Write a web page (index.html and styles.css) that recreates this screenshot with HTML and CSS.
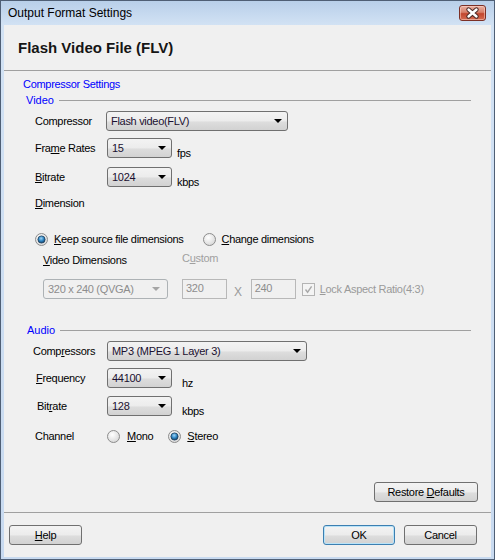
FILE: index.html
```html
<!DOCTYPE html>
<html lang="en">
<head>
  <meta charset="UTF-8">
  <title>Output Format Settings</title>
  <link rel="stylesheet" href="styles.css">
</head>
<body>
  <div class="window">
    <div class="titlebar">
      <span class="title">Output Format Settings</span>
      <span class="close">
        <svg width="27" height="16" viewBox="0 0 27 16">
          <path d="M9.5 4.5 L17.5 11.5 M17.5 4.5 L9.5 11.5" stroke="#4a2a26" stroke-width="4.4" stroke-linecap="round"/>
          <path d="M9.5 4.5 L17.5 11.5 M17.5 4.5 L9.5 11.5" stroke="#fff" stroke-width="2.4" stroke-linecap="round"/>
        </svg>
      </span>
    </div>

    <div class="client">
      <div class="header">
        <h1>Flash Video File (FLV)</h1>
      </div>

      <div class="main">
        <div class="section-title">Compressor Settings</div>

        <div class="group"><span>Video</span><span class="rule"></span></div>

        <div class="row row-compressor">
          <span class="lbl">Compressor</span>
          <div class="combo combo-wide">Flash video(FLV)<i class="arrow"></i></div>
        </div>

        <div class="row row-frame">
          <span class="lbl">Fra<u>m</u>e Rates</span>
          <div class="combo combo-small">15<i class="arrow"></i></div>
          <span class="unit">fps</span>
        </div>

        <div class="row row-bitrate">
          <span class="lbl"><u>B</u>itrate</span>
          <div class="combo combo-small">1024<i class="arrow"></i></div>
          <span class="unit">kbps</span>
        </div>

        <div class="row row-text row-dimension">
          <span class="lbl"><u>D</u>imension</span>
        </div>

        <div class="row row-radios">
          <label class="radio checked">
            <svg width="13" height="13" viewBox="0 0 13 13">
              <defs>
                <radialGradient id="rb1" cx="0.4" cy="0.35" r="0.7"><stop offset="0" stop-color="#fff"/><stop offset="1" stop-color="#d6d6d6"/></radialGradient>
                <radialGradient id="dot1" cx="0.45" cy="0.35" r="0.65"><stop offset="0" stop-color="#9fd4f5"/><stop offset="0.55" stop-color="#2f86c4"/><stop offset="1" stop-color="#123f66"/></radialGradient>
              </defs>
              <circle cx="6.5" cy="6.5" r="6" fill="url(#rb1)" stroke="#8c8c8c"/>
              <circle cx="6.5" cy="6.5" r="3.6" fill="url(#dot1)" stroke="#1d3e5c" stroke-width="0.8"/>
            </svg>
            <span><u>K</u>eep source file dimensions</span>
          </label>
          <label class="radio">
            <svg width="13" height="13" viewBox="0 0 13 13">
              <defs>
                <radialGradient id="rb2" cx="0.4" cy="0.35" r="0.7"><stop offset="0" stop-color="#fff"/><stop offset="1" stop-color="#d6d6d6"/></radialGradient>
              </defs>
              <circle cx="6.5" cy="6.5" r="6" fill="url(#rb2)" stroke="#8c8c8c"/>
            </svg>
            <span><u>C</u>hange dimensions</span>
          </label>
        </div>

        <div class="row row-text row-vdim">
          <span class="lbl-vdim"><u>V</u>ideo Dimensions</span>
          <span class="custom">C<u>u</u>stom</span>
        </div>

        <div class="row row-custom">
          <div class="combo combo-dim disabled">320 x 240 (QVGA)<i class="arrow"></i></div>
          <div class="textbox disabled">320</div>
          <span class="times">X</span>
          <div class="textbox disabled">240</div>
          <label class="check disabled">
            <svg width="13" height="13" viewBox="0 0 13 13">
              <rect x="0.5" y="0.5" width="12" height="12" fill="#f4f4f4" stroke="#b4b4b4"/>
              <path d="M3.5 6.5 L5.6 9.2 L9.6 3.4" fill="none" stroke="#a8a8a8" stroke-width="1.4"/>
            </svg>
            <span><u>L</u>ock Aspect Ratio(4:3)</span>
          </label>
        </div>

        <div class="group group-audio"><span>Audio</span><span class="rule"></span></div>

        <div class="row row-acomp">
          <span class="lbl">Comp<u>r</u>essors</span>
          <div class="combo combo-audio">MP3 (MPEG 1 Layer 3)<i class="arrow"></i></div>
        </div>

        <div class="row row-freq">
          <span class="lbl"><u>F</u>requency</span>
          <div class="combo combo-small">44100<i class="arrow"></i></div>
          <span class="unit unit-audio">hz</span>
        </div>

        <div class="row row-abit">
          <span class="lbl">Bit<u>r</u>ate</span>
          <div class="combo combo-small">128<i class="arrow"></i></div>
          <span class="unit unit-audio">kbps</span>
        </div>

        <div class="row row-channel">
          <span class="lbl">Channel</span>
          <label class="radio">
            <svg width="13" height="13" viewBox="0 0 13 13">
              <defs>
                <radialGradient id="rb3" cx="0.4" cy="0.35" r="0.7"><stop offset="0" stop-color="#fff"/><stop offset="1" stop-color="#d6d6d6"/></radialGradient>
              </defs>
              <circle cx="6.5" cy="6.5" r="6" fill="url(#rb3)" stroke="#8c8c8c"/>
            </svg>
            <span><u>M</u>ono</span>
          </label>
          <label class="radio checked">
            <svg width="13" height="13" viewBox="0 0 13 13">
              <defs>
                <radialGradient id="rb4" cx="0.4" cy="0.35" r="0.7"><stop offset="0" stop-color="#fff"/><stop offset="1" stop-color="#d6d6d6"/></radialGradient>
                <radialGradient id="dot4" cx="0.45" cy="0.35" r="0.65"><stop offset="0" stop-color="#9fd4f5"/><stop offset="0.55" stop-color="#2f86c4"/><stop offset="1" stop-color="#123f66"/></radialGradient>
              </defs>
              <circle cx="6.5" cy="6.5" r="6" fill="url(#rb4)" stroke="#8c8c8c"/>
              <circle cx="6.5" cy="6.5" r="3.6" fill="url(#dot4)" stroke="#1d3e5c" stroke-width="0.8"/>
            </svg>
            <span><u>S</u>tereo</span>
          </label>
        </div>

        <div class="actions">
          <button class="btn btn-restore">Restore <u>D</u>efaults</button>
        </div>
      </div>

      <div class="footer">
        <button class="btn"><u>H</u>elp</button>
        <span class="spacer"></span>
        <button class="btn btn-default">OK</button>
        <button class="btn">Cancel</button>
      </div>
    </div>
  </div>
</body>
</html>
```

FILE: styles.css
```css
body {
  margin: 0;
  font-family: "Liberation Sans", Arial, sans-serif;
  font-size: 11px;
  color: #000;
}

.window {
  width: 495px;
  height: 560px;
  box-sizing: border-box;
  border: 1px solid #4f5f75;
  padding: 0 3px 2px;
  background: linear-gradient(#b8cfe9 0, #d2e2f4 24px, #c8daf0 100%);
  display: flex;
  flex-direction: column;
}

.titlebar {
  height: 24px;
  display: flex;
  align-items: flex-start;
  padding-left: 4px;
}

.title {
  font-size: 12px;
  line-height: 24px;
}

.close {
  margin: 4px 5px 0 auto;
  width: 25px;
  height: 14px;
  border: 1px solid #7c3026;
  border-radius: 3px;
  background: linear-gradient(#eab0a2 0%, #d7806a 45%, #c2462e 55%, #d56c52 100%);
  box-shadow: inset 0 0 0 1px rgba(255, 220, 210, 0.5);
  display: flex;
  align-items: center;
  justify-content: center;
}

.close svg {
  display: block;
  margin: -1px;
}

.client {
  flex: 1;
  background: #f0f0f0;
  display: flex;
  flex-direction: column;
}

.header {
  height: 45px;
  border-bottom: 1px solid #a0a0a0;
  padding-left: 14px;
  display: flex;
  align-items: center;
}

.header h1 {
  margin: 0;
  font-size: 15px;
  font-weight: bold;
  color: #151515;
}

.main {
  flex: 1;
  padding: 0 20px 10px 19px;
  display: flex;
  flex-direction: column;
}

.section-title {
  margin-top: 6px;
  height: 14px;
  line-height: 14px;
  color: #0000ff;
  letter-spacing: -0.3px;
}

.group {
  margin-top: 2px;
  height: 14px;
  padding-left: 3px;
  display: flex;
  align-items: center;
  color: #0000ff;
}

.group .rule {
  flex: 1;
  height: 0;
  border-top: 1px solid #a0a0a0;
  margin-left: 5px;
}

.group-audio {
  margin-top: 24px;
  padding-left: 4px;
}

.row {
  display: flex;
  align-items: center;
  height: 20px;
  padding-left: 12px;
  letter-spacing: -0.3px;
}

.row-text {
  height: 14px;
}

.lbl {
  width: 72px;
  flex: none;
}

.row-compressor { margin-top: 4px; }
.row-compressor .lbl { width: 71px; }
.row-frame { margin-top: 7px; }
.row-bitrate { margin-top: 9px; }
.row-dimension { margin-top: 9px; }

.row-radios {
  margin-top: 21px;
  height: 16px;
}

.row-vdim {
  margin-top: 6px;
  padding-left: 20px;
}

.lbl-vdim {
  width: 139px;
}

.custom {
  color: #a0a0a0;
  margin-bottom: 4px;
}

.row-custom {
  margin-top: 12px;
  padding-left: 20px;
}

.row-acomp { margin-top: 4px; padding-left: 10px; }
.row-acomp .lbl { width: 74px; }
.row-freq { margin-top: 7px; padding-left: 13px; }
.row-freq .lbl { width: 71px; }
.row-abit { margin-top: 8px; padding-left: 14px; }
.row-abit .lbl { width: 70px; }

.row-channel {
  margin-top: 12px;
  height: 16px;
}

.unit {
  align-self: flex-end;
  margin: 0 0 -2px 5px;
  line-height: 14px;
}

.unit-audio {
  margin-left: 10px;
}

/* combo boxes */
.combo {
  box-sizing: border-box;
  height: 20px;
  border: 1px solid #707070;
  border-radius: 3px;
  background: linear-gradient(#f3f3f3 0%, #ececec 50%, #dddddd 55%, #d2d2d2 100%);
  padding-left: 4px;
  display: flex;
  align-items: center;
  flex: none;
  color: #1b1030;
}

.combo .arrow {
  margin-left: auto;
  margin-right: 5px;
  width: 0;
  height: 0;
  border-left: 4px solid transparent;
  border-right: 4px solid transparent;
  border-top: 4px solid #000;
}

.combo-wide { width: 182px; }
.combo-small { width: 65px; }
.combo-audio { width: 200px; }

.combo-dim {
  width: 125px;
  margin-right: 14px;
}

.combo.disabled {
  border-color: #adb2b5;
  background: #f0f0f0;
  color: #8d8d8d;
}

.combo.disabled .arrow {
  border-top-color: #a5a5a5;
  margin-right: 7px;
}

.textbox {
  box-sizing: border-box;
  width: 45px;
  height: 20px;
  border: 1px solid #b8b8b8;
  background: #f0f0f0;
  color: #8d8d8d;
  padding-left: 3px;
  line-height: 17px;
}

.times {
  color: #9a9a9a;
  font-size: 12px;
  margin: 6px 9px 0 7px;
}

.check {
  display: flex;
  align-items: center;
  margin-left: 6px;
  color: #9a9a9a;
}

.check svg {
  margin-right: 5px;
}

.radio {
  display: flex;
  align-items: center;
}

.radio svg {
  margin-right: 6px;
}

.row-radios .radio + .radio {
  margin-left: 19px;
}

.row-channel .radio svg {
  margin-right: 7px;
}

.row-channel .radio + .radio {
  margin-left: 15px;
}

.row-channel .radio + .radio svg {
  margin-right: 6px;
}

/* buttons */
.actions {
  margin-top: auto;
  margin-right: -7px;
  display: flex;
  justify-content: flex-end;
}

.btn {
  box-sizing: border-box;
  height: 20px;
  width: 73px;
  border: 1px solid #707070;
  border-radius: 3px;
  background: linear-gradient(#f3f3f3 0%, #ececec 50%, #dddddd 55%, #d2d2d2 100%);
  font-family: "Liberation Sans", Arial, sans-serif;
  font-size: 11px;
  letter-spacing: -0.3px;
  color: #000;
  padding: 0;
}

.btn-restore {
  width: 104px;
}

.btn-default {
  width: 72px;
  border-color: #3c7fb1;
  box-shadow: inset 0 0 0 1px #b9e3f8;
}

.footer {
  height: 45px;
  box-sizing: border-box;
  border-top: 1px solid #a0a0a0;
  padding: 12px 14px 0 5px;
  display: flex;
  align-items: flex-start;
  gap: 9px;
}

.footer .spacer {
  flex: 1;
}
```
